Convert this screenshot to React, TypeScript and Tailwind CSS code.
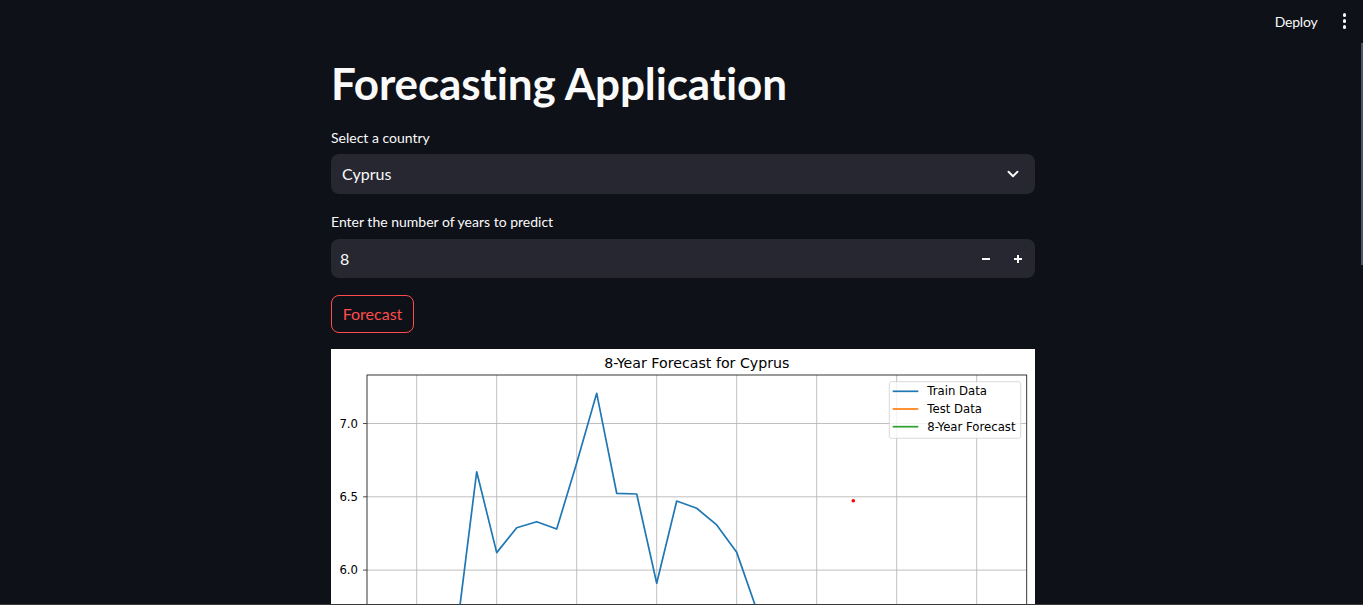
import React from 'react';
import { ChevronDown } from 'lucide-react';

const font = { fontFamily: 'Lato, "Noto Sans", sans-serif' };

// chart geometry, in px of the 704-wide image
const AX = { left: 36, top: 26, right: 695.7, bottom: 420 };
const yOf = (v: number) => 74.5 + (7 - v) * 146.6;
const xOf = (i: number) => 125.7 + 20 * i;

const train = [
  { i: -4, v: 5.1 }, { i: -3, v: 5.3 }, { i: -2, v: 5.2 }, { i: -1, v: 5.45 },
  { i: 0, v: 5.58 }, { i: 1, v: 6.671 }, { i: 2, v: 6.119 }, { i: 3, v: 6.289 },
  { i: 4, v: 6.33 }, { i: 5, v: 6.28 }, { i: 6, v: 6.731 }, { i: 7, v: 7.206 },
  { i: 8, v: 6.524 }, { i: 9, v: 6.519 }, { i: 10, v: 5.91 }, { i: 11, v: 6.471 },
  { i: 12, v: 6.422 }, { i: 13, v: 6.308 }, { i: 14, v: 6.121 }, { i: 15, v: 5.73 },
  { i: 16, v: 5.5 }, { i: 17, v: 5.35 },
];

const vGrid = [85.7, 165.7, 245.7, 325.7, 405.7, 485.7, 565.7, 645.7];
const hTicks = [7.0, 6.5, 6.0];

function ForecastChart() {
  const pts = train.map(p => `${xOf(p.i)},${yOf(p.v)}`).join(' ');
  const dv = { fontFamily: '"DejaVu Sans", sans-serif' };
  return (
    <svg width="704" height="440" viewBox="0 0 704 440" className="block bg-white">
      <defs>
        <clipPath id="axes">
          <rect x={AX.left} y={AX.top} width={AX.right - AX.left} height={AX.bottom - AX.top} />
        </clipPath>
      </defs>
      <text x="365.9" y="19" textAnchor="middle" fontSize="14.2" fill="#000" style={dv}>8-Year Forecast for Cyprus</text>

      {/* grid */}
      <g stroke="#b0b0b0" strokeWidth="0.8">
        {vGrid.map(x => <line key={x} x1={x} y1={AX.top} x2={x} y2={AX.bottom} />)}
        {hTicks.map(v => <line key={v} x1={AX.left} y1={yOf(v)} x2={AX.right} y2={yOf(v)} />)}
      </g>

      {/* y ticks */}
      {hTicks.map(v => (
        <g key={v}>
          <line x1="32" y1={yOf(v)} x2={AX.left} y2={yOf(v)} stroke="#222" strokeWidth="0.8" />
          <text x="27" y={yOf(v)} textAnchor="end" dominantBaseline="central" fontSize="11.7" fill="#000" style={dv}>{v.toFixed(1)}</text>
        </g>
      ))}

      <g clipPath="url(#axes)">
        <polyline points={pts} fill="none" stroke="#1f77b4" strokeWidth="1.7" strokeLinejoin="round" />
        <circle cx="522.3" cy="151.7" r="1.8" fill="#ff0000" />
      </g>

      <rect x={AX.left} y={AX.top} width={AX.right - AX.left} height={AX.bottom - AX.top} fill="none" stroke="#222" strokeWidth="0.9" />

      {/* legend */}
      <rect x="558.3" y="32.7" width="131.4" height="56.6" rx="2" fill="#fff" fillOpacity="0.8" stroke="#d0d0d0" strokeWidth="0.8" />
      {[
        { label: 'Train Data', color: '#1f77b4', y: 42.3 },
        { label: 'Test Data', color: '#ff7f0e', y: 60 },
        { label: '8-Year Forecast', color: '#2ca02c', y: 77.7 },
      ].map(l => (
        <g key={l.label}>
          <line x1="561.7" y1={l.y} x2="587.3" y2={l.y} stroke={l.color} strokeWidth="1.7" />
          <text x="596.3" y={l.y} dominantBaseline="central" fontSize="11.7" fill="#000" style={dv}>{l.label}</text>
        </g>
      ))}
    </svg>
  );
}

export default function App() {
  return (
    <div className="relative h-[605px] overflow-hidden bg-[#0e1117] text-[#fafafa]" style={font}>
      {/* toolbar */}
      <div className="absolute right-0 top-0 flex h-[42px] items-center gap-[22px] pr-[14px]">
        <span className="text-[14px] tracking-[-0.2px]">Deploy</span>
        <div className="flex flex-col items-center gap-[2.5px] px-[3px]">
          <span className="h-[3.5px] w-[3.5px] rounded-full bg-[#fafafa]" />
          <span className="h-[3.5px] w-[3.5px] rounded-full bg-[#fafafa]" />
          <span className="h-[3.5px] w-[3.5px] rounded-full bg-[#fafafa]" />
        </div>
      </div>
      <div className="absolute right-0 top-[43px] h-[222px] w-[2px] bg-[#4b5563]" />
      <div className="absolute bottom-0 left-0 right-0 h-px bg-[#3a3a3a]" />

      <div className="pl-[3px]">
        <main className="mx-auto w-[704px] pt-[57px]">
          <h1 className="h-[53px] text-[44px] font-bold leading-[1.2] tracking-[-0.12px]">Forecasting Application</h1>

          <label className="mt-[18px] block h-[20px] text-[14px] leading-[20px]">Select a country</label>
          <div className="mt-[6px] flex h-[40px] items-center justify-between rounded-lg bg-[#262730] pl-[11px] pr-[13px]">
            <span className="text-[16px]">Cyprus</span>
            <ChevronDown className="h-[18px] w-[18px] text-[#fafafa]" strokeWidth={2.5} />
          </div>

          <label className="mt-[18px] block h-[20px] text-[14px] leading-[20px]">Enter the number of years to predict</label>
          <div className="mt-[7px] flex h-[39px] items-center justify-between rounded-lg bg-[#262730] pl-[9px]">
            <span className="text-[16px]">8</span>
            <div className="flex h-full items-center pr-[1px]">
              <button className="flex h-full w-[32px] items-center justify-center">
                <svg width="10" height="10" viewBox="0 0 10 10"><line x1="1" y1="5" x2="9" y2="5" stroke="#fafafa" strokeWidth="2" /></svg>
              </button>
              <button className="flex h-full w-[32px] items-center justify-center">
                <svg width="10" height="10" viewBox="0 0 10 10"><line x1="1" y1="5" x2="9" y2="5" stroke="#fafafa" strokeWidth="2" /><line x1="5" y1="1" x2="5" y2="9" stroke="#fafafa" strokeWidth="2" /></svg>
              </button>
            </div>
          </div>

          <button className="mt-[17px] flex h-[38px] w-[83px] items-center justify-center rounded-lg border border-[#ff4b4b] text-[16px] text-[#ff4b4b]">
            Forecast
          </button>

          <div className="mt-[16px]">
            <ForecastChart />
          </div>
        </main>
      </div>
    </div>
  );
}
